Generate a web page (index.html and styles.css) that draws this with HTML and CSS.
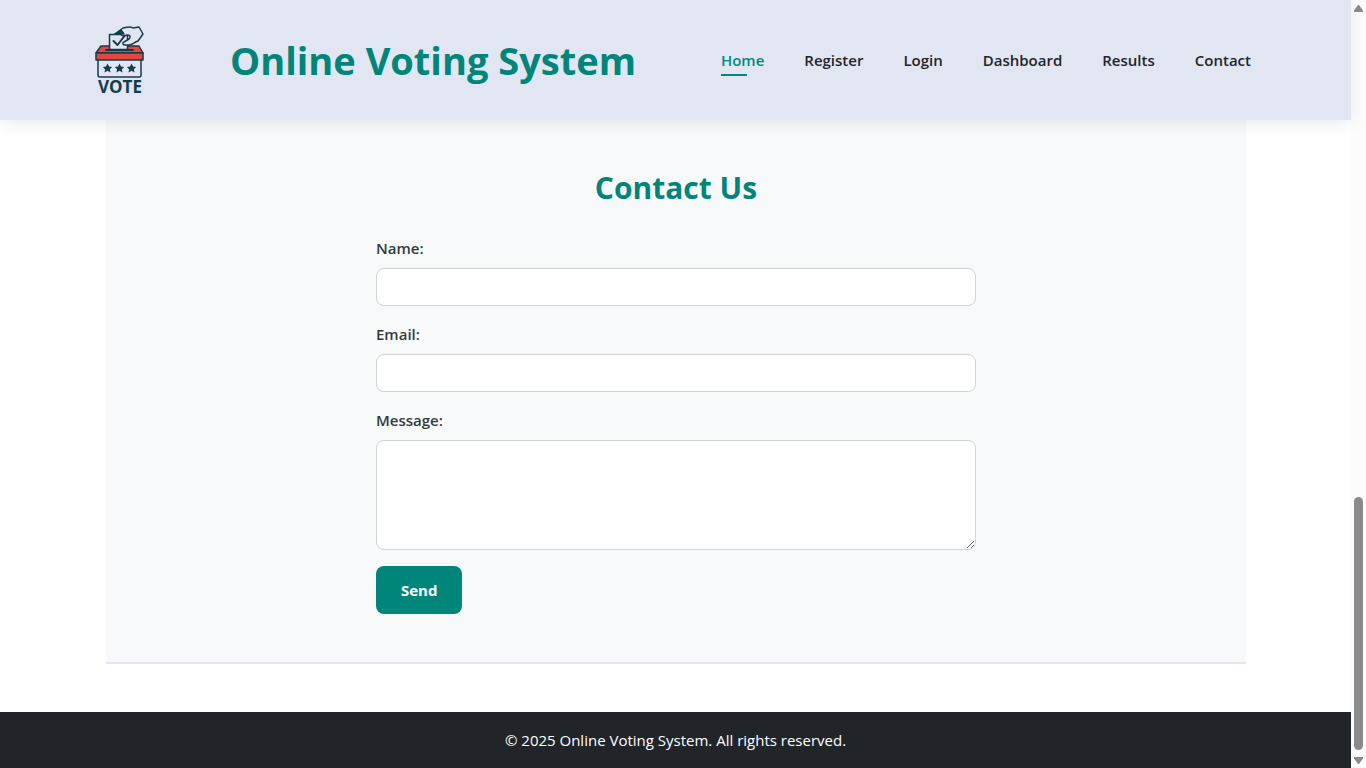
FILE: index.html
```
<!DOCTYPE html>
<html lang="en">
<head>
<meta charset="utf-8">
<title>Online Voting System</title>
<link rel="stylesheet" href="styles.css">
</head>
<body>
<div class="page">
  <header class="site-header">
    <a class="logo" href="#home" aria-label="Vote">
      <svg width="50" height="80" viewBox="0 -6 50 80" fill="none" stroke="#123d4d" stroke-width="1.500" stroke-linejoin="round" stroke-linecap="round">
        <path d="M6 20h38l4 7H1z" fill="#e8453c"/>
        <path d="M11 24h27" stroke-width="2"/>
        <path d="M14.500 23.500V8.500h18v15z" fill="#e1e5f2"/>
        <path d="M20 8l8-6c5-1 7-2 10 0l6-1 4 7-5 7c-4 1-5 4-9 4h-5c-2-1-1-3 0-3l5-3c2-2 1-4-1-4l-5 1-3-2z" fill="#e1e5f2"/>
        <path d="M20 8l6-4 3 4z" fill="#123d4d"/>
        <path d="M18.500 15l4 4 7-9" stroke-width="2"/>
        <path d="M1 27h47v7H1z" fill="#e8453c"/>
        <path d="M3 34v15q0 2 2 2h39q2 0 2-2V34"/>
        <g fill="#123d4d" stroke="none">
          <path id="star" d="M12.500 37.500l1.500 3 3.200.4-2.300 2.300.6 3.200-3-1.600-3 1.600.6-3.200-2.300-2.300 3.200-.4z"/>
          <use href="#star" x="12"/>
          <use href="#star" x="24"/>
        </g>
        <text class="logo-text" x="25" y="67" text-anchor="middle">VOTE</text>
      </svg>
    </a>
    <h1 class="site-title">Online Voting System</h1>
    <nav class="nav">
      <a class="nav-link active" href="#home">Home</a>
      <a class="nav-link" href="#register">Register</a>
      <a class="nav-link" href="#login">Login</a>
      <a class="nav-link" href="#dashboard">Dashboard</a>
      <a class="nav-link" href="#results">Results</a>
      <a class="nav-link" href="#contact">Contact</a>
    </nav>
  </header>
  <main class="main">
    <section class="contact" id="contact">
      <h2 class="contact-title">Contact Us</h2>
      <form class="form">
        <label class="label" for="name">Name:</label>
        <input class="field" id="name" type="text">
        <label class="label" for="email">Email:</label>
        <input class="field" id="email" type="email">
        <label class="label" for="message">Message:</label>
        <textarea class="field message" id="message"></textarea>
        <button class="send" type="button">Send</button>
      </form>
    </section>
  </main>
  <footer class="footer">© 2025 Online Voting System. All rights reserved.</footer>
</div>
<div class="scrollbar" aria-hidden="true">
  <svg width="9" height="7" viewBox="0 0 9 7" fill="#8b8b8b"><path d="M4 0h1l4 5.500V7H0V5.500z"/></svg>
  <div class="track"><div class="thumb"></div></div>
  <svg width="9" height="7" viewBox="0 0 9 7" fill="#8b8b8b"><path d="M4 7h1l4-5.500V0H0v1.500z"/></svg>
</div>
</body>
</html>
```
FILE: styles.css
```
* { box-sizing: border-box; }
body {
  margin: 0;
  min-height: 100vh;
  display: flex;
  background: #fff;
  color: #212529;
  font: 15px/24px "Segoe UI", "Open Sans", "Noto Sans", sans-serif;
}
.page { flex: 1; min-width: 0; display: flex; flex-direction: column; }
.site-header {
  position: relative;
  display: flex;
  align-items: center;
  justify-content: space-between;
  height: 120px;
  padding: 0 100px 0 95px;
  background: #e2e6f2;
  box-shadow: 0 4px 16px rgba(0, 0, 0, 0.08);
}
.logo svg { display: block; }
.logo-text { font: 700 17px "Open Sans", sans-serif; fill: #123d4d; stroke: none; }
.site-title { margin: 0; color: #00857a; font-size: 38px; line-height: 48px; font-weight: 700; white-space: nowrap; }
.nav { display: flex; gap: 40px; }
.nav-link { position: relative; color: #212529; font-weight: 600; text-decoration: none; }
.nav-link.active { color: #00897b; }
.nav-link.active::after {
  content: "";
  position: absolute;
  left: 0;
  bottom: -4px;
  width: 60%;
  height: 2px;
  background: #00897b;
}
.main { flex: 1; padding: 0 105px 48px 106px; }
.contact { padding: 48px 24px; background: #f8f9fb; border-bottom: 2px solid #e2e6f2; }
.contact-title { margin: 0 0 28px; color: #00857a; font-size: 30px; line-height: 40px; font-weight: 700; text-align: center; }
.form { display: flex; flex-direction: column; max-width: 600px; margin: 0 auto; }
.label { margin-bottom: 8px; font-weight: 600; color: #343a40; }
.field {
  width: 100%;
  height: 38px;
  margin: 0 0 16px;
  padding: 8px 12px;
  border: 1px solid #ced4da;
  border-radius: 8px;
  background: #fff;
  font: inherit;
}
.message { height: 110px; resize: vertical; }
.send {
  align-self: flex-start;
  padding: 12px 25px;
  border: 0;
  border-radius: 8px;
  background: #00857a;
  color: #fff;
  font: inherit;
  font-weight: 700;
}
.footer { padding: 16px; background: #212529; color: #fff; text-align: center; }
.scrollbar {
  flex: 0 0 15px;
  display: flex;
  flex-direction: column;
  align-items: center;
  padding: 5px 0 4px;
  background: #fcfcfc;
}
.track { flex: 1; display: flex; flex-direction: column; justify-content: flex-end; padding-bottom: 7px; }
.thumb { width: 9px; height: 34.3%; border-radius: 5px; background: #8b8b8b; }
```
